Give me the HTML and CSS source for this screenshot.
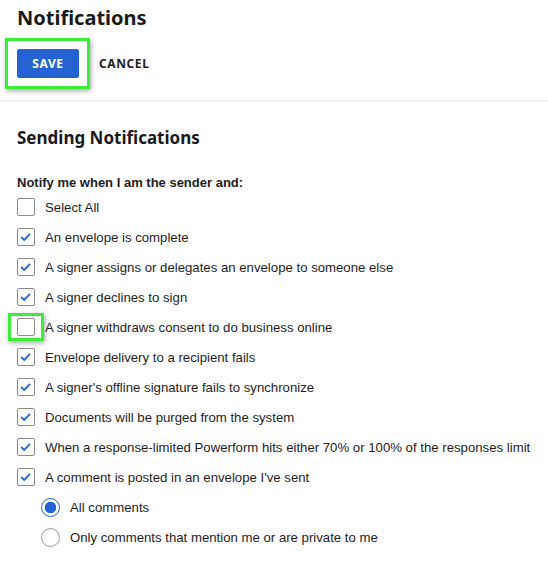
FILE: index.html
```html
<!DOCTYPE html>
<html>
  <head>
    <meta charset="utf-8">
    <title>Notifications</title>
    <link rel="stylesheet" href="styles.css">
  </head>
  <body>
    <h1 class="page-title">Notifications</h1>
    <div class="toolbar">
      <span class="mark mark-save"><button class="btn btn-save">SAVE</button></span>
      <button class="btn btn-cancel">CANCEL</button>
    </div>
    <div class="divider"></div>

    <div class="section">
      <h2 class="section-title">Sending Notifications</h2>
      <div class="group-label">Notify me when I am the sender and:</div>

      <div class="row"><span class="box"></span><span class="label">Select All</span></div>
      <div class="row"><span class="box on"><svg viewBox="0 0 18 18"><polyline points="3.5,9 7,12.3 13.5,5.5"/></svg></span><span class="label">An envelope is complete</span></div>
      <div class="row"><span class="box on"><svg viewBox="0 0 18 18"><polyline points="3.5,9 7,12.3 13.5,5.5"/></svg></span><span class="label">A signer assigns or delegates an envelope to someone else</span></div>
      <div class="row"><span class="box on"><svg viewBox="0 0 18 18"><polyline points="3.5,9 7,12.3 13.5,5.5"/></svg></span><span class="label">A signer declines to sign</span></div>
      <div class="row"><span class="mark mark-box"><span class="box"></span></span><span class="label">A signer withdraws consent to do business online</span></div>
      <div class="row"><span class="box on"><svg viewBox="0 0 18 18"><polyline points="3.5,9 7,12.3 13.5,5.5"/></svg></span><span class="label">Envelope delivery to a recipient fails</span></div>
      <div class="row"><span class="box on"><svg viewBox="0 0 18 18"><polyline points="3.5,9 7,12.3 13.5,5.5"/></svg></span><span class="label">A signer's offline signature fails to synchronize</span></div>
      <div class="row"><span class="box on"><svg viewBox="0 0 18 18"><polyline points="3.5,9 7,12.3 13.5,5.5"/></svg></span><span class="label">Documents will be purged from the system</span></div>
      <div class="row"><span class="box on"><svg viewBox="0 0 18 18"><polyline points="3.5,9 7,12.3 13.5,5.5"/></svg></span><span class="label">When a response-limited Powerform hits either 70% or 100% of the responses limit</span></div>
      <div class="row"><span class="box on"><svg viewBox="0 0 18 18"><polyline points="3.5,9 7,12.3 13.5,5.5"/></svg></span><span class="label">A comment is posted in an envelope I've sent</span></div>

      <div class="row sub"><span class="radio on"></span><span class="label">All comments</span></div>
      <div class="row sub"><span class="radio"></span><span class="label">Only comments that mention me or are private to me</span></div>
    </div>
  </body>
</html>
```

FILE: styles.css
```css
body {
  margin: 0;
  background: #fff;
  color: #1e1e1e;
  font-family: "Liberation Sans", Arial, sans-serif;
  font-size: 13px;
  overflow: hidden;
}

.page-title {
  margin: 0;
  padding-left: 17px;
  font-family: "Noto Sans", sans-serif;
  font-size: 20px;
  font-weight: 700;
  line-height: 36px;
  color: #1a1a1a;
}

.toolbar {
  display: flex;
  align-items: center;
  padding-left: 17px;
  margin-top: 2px;
}

/* green annotation frames */
.mark {
  display: inline-flex;
  border: 3px solid #3bec3b;
  box-shadow: 1px 2px 5px rgba(0,0,0,0.35);
}
.mark-save {
  padding: 8px 8px 8px 9px;
  margin-left: -12px;
}
.mark-box {
  padding: 2px 6px;
  margin-left: -9px;
  margin-right: -9px;
}

.btn {
  border: 0;
  background: none;
  font-family: "Noto Sans", sans-serif;
  font-weight: 700;
  font-size: 12px;
  letter-spacing: 0.6px;
  cursor: pointer;
}
.btn-save {
  width: 62px;
  height: 29px;
  border-radius: 2px;
  background: #2463d1;
  color: #fff;
  padding: 0;
}
.btn-cancel {
  margin-left: 9px;
  padding: 0;
  color: #1e1e1e;
}

.divider {
  height: 2px;
  background: #f2f2f2;
  margin-top: 11px;
}

.section {
  padding-left: 17px;
}

.section-title {
  margin: 24px 0 0;
  font-family: "Noto Sans", sans-serif;
  font-size: 17px;
  font-weight: 700;
  line-height: 24px;
  color: #1a1a1a;
}

.group-label {
  margin-top: 24px;
  font-weight: 700;
  line-height: 18px;
}

.row {
  display: flex;
  align-items: center;
  height: 30px;
}
.row.sub {
  padding-left: 24px;
}

.box {
  box-sizing: border-box;
  width: 18px;
  height: 18px;
  border: 1px solid #8a8a8a;
  border-radius: 2px;
  background: #fff;
  flex: none;
}
.box svg {
  display: block;
  width: 16px;
  height: 16px;
}
.box polyline {
  fill: none;
  stroke: #2463d1;
  stroke-width: 2;
}

.label {
  margin-left: 10px;
  white-space: nowrap;
  font-size: 13.2px;
}

.radio {
  box-sizing: border-box;
  width: 19px;
  height: 19px;
  border-radius: 50%;
  border: 1px solid #9a9a9a;
  background: #fff;
  flex: none;
}
.radio.on {
  border: 1.5px solid #2463d1;
  background: radial-gradient(circle, #2463d1 0 5.5px, #fff 6px);
}
```
